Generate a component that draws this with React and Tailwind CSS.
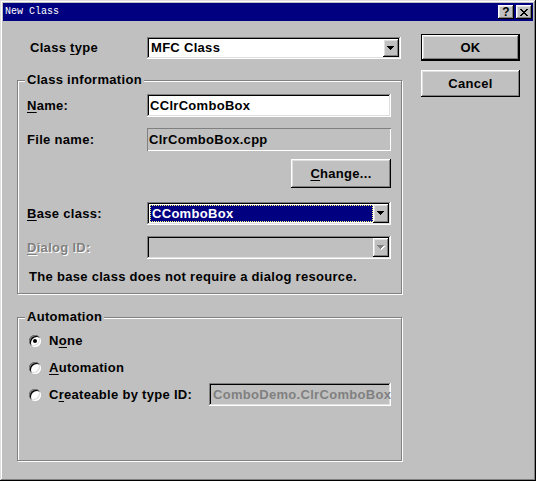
import React from 'react';

const raised = 'shadow-[inset_-1px_-1px_#000,inset_1px_1px_#fff,inset_-2px_-2px_#808080,inset_2px_2px_#dfdfdf]';
const sunken = 'shadow-[inset_-1px_-1px_#fff,inset_1px_1px_#808080,inset_-2px_-2px_#dfdfdf,inset_2px_2px_#000]';
const etched = 'border border-[#808080] shadow-[inset_1px_1px_#fff,1px_1px_#fff]';

const Arrow = ({ disabled }) => (
  <svg width="8" height="5" viewBox="0 0 8 5">
    {disabled && <path d="M1 1h7v1H1zM2 2h5v1H2zM3 3h3v1H3zM4 4h1v1H4z" fill="#fff" />}
    <path d="M0 0h7v1H0zM1 1h5v1H1zM2 2h3v1H2zM3 3h1v1H3z" fill={disabled ? '#808080' : '#000'} />
  </svg>
);

const Combo = ({ className, disabled, children }) => (
  <div className={`flex p-[2px] ${sunken} ${disabled ? 'bg-[#c0c0c0]' : 'bg-white'} ${className}`}>
    <div className="flex-1 flex items-center min-w-0">{children}</div>
    <div className={`w-[16px] flex items-center justify-center bg-[#c0c0c0] ${raised}`}>
      <Arrow disabled={disabled} />
    </div>
  </div>
);

const Radio = ({ checked }) => (
  <div className="w-[12px] h-[12px] rounded-full bg-white flex items-center justify-center shadow-[inset_1px_1px_#808080,inset_-1px_-1px_#fff,inset_2px_2px_#000,inset_-2px_-2px_#dfdfdf]">
    {checked && <div className="w-[4px] h-[4px] rounded-full bg-black" />}
  </div>
);

export default function App() {
  return (
    <div className="w-[536px] h-[481px] bg-[#c0c0c0] p-[3px] flex flex-col shadow-[inset_-1px_-1px_#000,inset_1px_1px_#dfdfdf,inset_-2px_-2px_#808080,inset_2px_2px_#fff] font-['Liberation_Sans',Arial,sans-serif] font-bold text-[13px] tracking-[0.3px] leading-[16px] text-black">
      {/* Title bar */}
      <div className="h-[18px] bg-[#000080] flex items-center pl-[2px] pr-[1px]">
        <span className="font-['Liberation_Mono',monospace] font-normal text-[10px] tracking-normal leading-none text-white">New Class</span>
        <div className="ml-auto flex gap-[2px]">
          <div className={`w-[16px] h-[14px] bg-[#c0c0c0] flex items-center justify-center text-[12px] leading-none tracking-normal ${raised}`}>?</div>
          <div className={`w-[16px] h-[14px] bg-[#c0c0c0] flex items-center justify-center ${raised}`}>
            <svg width="8" height="7" viewBox="0 0 8 7">
              <path d="M0 0h2v1H0zM6 0h2v1H6zM1 1h2v1H1zM5 1h2v1H5zM2 2h4v1H2zM3 3h2v1H3zM2 4h4v1H2zM1 5h2v1H1zM5 5h2v1H5zM0 6h2v1H0zM6 6h2v1H6z" fill="#000" />
            </svg>
          </div>
        </div>
      </div>

      <div className="flex">
        {/* Left column */}
        <div className="ml-[14px] w-[386px] flex flex-col">
          <div className="mt-[16px] h-[22px] flex items-center">
            <div className="w-[130px] pl-[13px]">Class <u className="underline-offset-2">t</u>ype</div>
            <Combo className="w-[254px] h-[22px]">
              <span className="pl-[2px]">MFC Class</span>
            </Combo>
          </div>

          <fieldset className={`mt-[13px] w-[385px] pl-[9px] pb-[8px] ${etched}`}>
            <legend className="ml-[-2px] px-[2px] bg-[#c0c0c0]">Class information</legend>

            <div className="mt-[6px] flex items-center h-[23px]">
              <div className="w-[120px]"><u className="underline-offset-2">N</u>ame:</div>
              <div className={`w-[244px] h-[23px] bg-white flex items-center pl-[3px] ${sunken}`}>CClrComboBox</div>
            </div>

            <div className="mt-[11px] flex items-center h-[23px]">
              <div className="w-[120px]">File name:</div>
              <div className="w-[244px] h-[23px] flex items-center pl-[2px] shadow-[inset_1px_1px_#808080,inset_-1px_-1px_#fff]">ClrComboBox.cpp</div>
            </div>

            <div className="mt-[8px] flex">
              <div className={`ml-[264px] w-[100px] h-[29px] flex items-center justify-center ${raised}`}>
                <span><u className="underline-offset-2">C</u>hange...</span>
              </div>
            </div>

            <div className="mt-[14px] flex items-center h-[23px]">
              <div className="w-[120px]"><u className="underline-offset-2">B</u>ase class:</div>
              <Combo className="w-[244px] h-[23px]">
                <div className="flex-1 h-[17px] ml-[1px] bg-[#000080] border border-dotted border-[#ffff7f] text-white flex items-center pl-[1px]">CComboBox</div>
              </Combo>
            </div>

            <div className="mt-[11px] flex items-center h-[23px]">
              <div className="w-[120px] text-[#808080] [text-shadow:1px_1px_#fff]"><u className="underline-offset-2">D</u>ialog ID:</div>
              <Combo className="w-[244px] h-[23px]" disabled />
            </div>

            <div className="mt-[10px] h-[16px] ml-[2px]">The base class does not require a dialog resource.</div>
          </fieldset>

          <fieldset className={`mt-[15px] w-[385px] pl-[9px] pb-[54px] ${etched}`}>
            <legend className="ml-[-2px] px-[2px] bg-[#c0c0c0]">Automation</legend>

            <div className="mt-[8px] h-[16px] flex items-center ml-[2px] gap-[8px]">
              <Radio checked />
              <span>N<u className="underline-offset-2">o</u>ne</span>
            </div>
            <div className="mt-[11px] h-[16px] flex items-center ml-[2px] gap-[8px]">
              <Radio />
              <span><u className="underline-offset-2">A</u>utomation</span>
            </div>
            <div className="mt-[7px] h-[23px] flex items-center">
              <div className="w-[182px] flex items-center pl-[2px] gap-[8px]">
                <Radio />
                <span>C<u className="underline-offset-2">r</u>eateable by type ID:</span>
              </div>
              <div className={`w-[182px] h-[23px] flex items-center pl-[4px] text-[#808080] whitespace-nowrap overflow-hidden ${sunken}`}>ComboDemo.ClrComboBox</div>
            </div>
          </fieldset>
        </div>

        {/* Right column */}
        <div className="ml-[18px] w-[99px] flex flex-col">
          <div className="mt-[13px] h-[27px] flex items-center justify-center shadow-[inset_0_0_0_1px_#000,inset_-2px_-2px_#000,inset_2px_2px_#fff,inset_-3px_-3px_#808080,inset_3px_3px_#dfdfdf]">OK</div>
          <div className={`mt-[9px] h-[27px] flex items-center justify-center ${raised}`}>Cancel</div>
        </div>
      </div>
    </div>
  );
}
